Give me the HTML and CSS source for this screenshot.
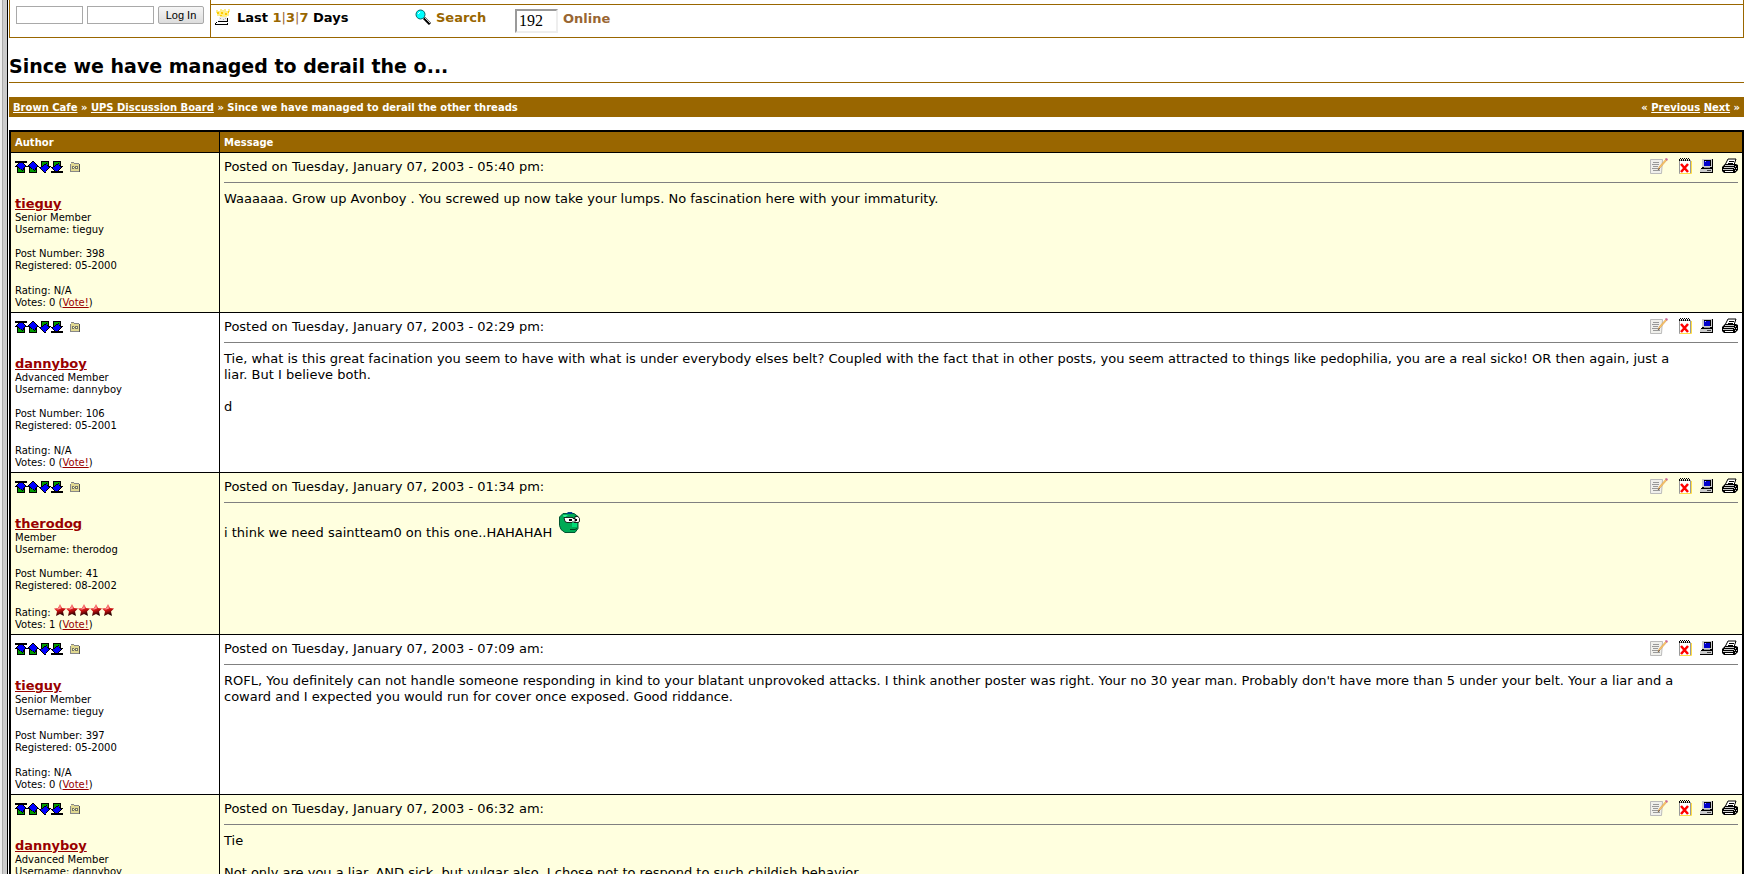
FILE: index.html
```html
<!DOCTYPE html>
<html lang="en">
<head>
    <meta charset="UTF-8">
    <meta name="viewport" content="width=device-width, initial-scale=1.0">
    <title>Brown Cafe: Since we have managed to derail the other threads</title>
    <link rel="stylesheet" href="styles.css">
</head>
<body>
    <!-- Icon set -->
    <svg class="sprite" aria-hidden="true">
        <symbol id="up" viewBox="0 0 12 12">
            <path d="M2 5h8v7H2z" fill="#000"/><path d="M3 5h6v6H3z" fill="#090"/>
            <path d="M0 5h1V4h1V3h1V2h1V1h1V0h2v1h1v1h1v1h1v1h1v1h1v1h-2v1H9v2H8v1H7V9H6V8H4V7H3V6H0z" fill="#000"/>
            <path d="M2 5V4h1V3h1V2h1V1h2v1h1v1h1v1h1v2H9v1H8v2H7V8H5V7H4V6H3V5z" fill="#00f"/>
        </symbol>
        <symbol id="top" viewBox="0 0 12 12">
            <use href="#up"/><path d="M0 0h12v2H0z" fill="#000"/>
        </symbol>
        <symbol id="down" viewBox="0 0 12 12">
            <path d="M2 0h8v7H2z" fill="#000"/><path d="M3 1h6v6H3z" fill="#090"/>
            <path d="M0 6h3V5h1V4h1V3h2V2h1v2h1v1h3v1h-1v1h-1v1H9v1H8v1H7v2H5v-1H4v-1H3V9H2V8H1V7H0z" fill="#000"/>
            <path d="M2 6h2V5h1V4h2V3h1v2h1v1h1v1H9v1H8v1H7v2H5v-1H4V9H3V8H2z" fill="#00f"/>
        </symbol>
        <symbol id="bottom" viewBox="0 0 12 12">
            <use href="#down"/><path d="M0 10h12v2H0z" fill="#000"/>
        </symbol>
        <symbol id="folder" viewBox="0 0 10 10">
            <path d="M1 1h3v1h6v8H1z" fill="#555"/><path d="M0 2h1V1h3v1h5v7H0z" fill="#e0d890"/>
            <path d="M0 2h1v7H0zM1 0h3v1H1zM4 1h5v1H4zM0 9h9v1H0z" fill="#888"/>
            <path d="M2 4h2v1h1V4h3v3H5V6H4v1H2z" fill="#776"/><path d="M3 5h1v1H3zM6 5h1v1H6z" fill="#ffc"/>
        </symbol>
        <symbol id="edit" viewBox="0 0 18 16">
            <path d="M.5 1.5h12l-1 14H.5z" fill="#f0f0ec" stroke="#bbb"/>
            <path d="M3 4.500h6M2 6.500h7M3 8.500h5M2 10.500h6M3 12.500h7" stroke="#999"/>
            <path d="M8 12l1-3 7-8 1 1-7 8z" fill="#fc6" stroke="#c84" stroke-width=".5"/>
            <path d="M15 1l1-1 2 1-1 2z" fill="#c69"/><path d="M8 12l1-2 1 1z" fill="#333"/>
        </symbol>
        <symbol id="delete" viewBox="0 0 14 16">
            <path d="M1.500 2.500h11v13h-11z" fill="#fff" stroke="#999"/><path d="M13.500 3v12.500H2" stroke="#fd4" fill="none"/>
            <path d="M1 1h1v2H1zM3 1h1v2H3zM5 1h1v2H5zM7 1h1v2H7zM9 1h1v2H9zM11 1h1v2h-1zM2 0h1v1H2zM4 0h1v1H4zM6 0h1v1H6zM8 0h1v1H8zM10 0h1v1h-1z" fill="#000"/>
            <path d="M3 6l7 8M10 6l-7 8" stroke="#f00" stroke-width="2.500"/>
        </symbol>
        <symbol id="computer" viewBox="0 0 14 14">
            <path d="M2 0h11v9H2z" fill="#000"/><path d="M2 0h10v8H2z" fill="#ccc"/><path d="M4 1h7v6H4z" fill="#000"/><path d="M4 2h6v5H4z" fill="#00c"/>
            <path d="M5 2h1v1H5z" fill="#aaf"/><path d="M4 8h6v1H4z" fill="#999"/>
            <path d="M1 9h12v5H0v-4h1z" fill="#000"/><path d="M0 10h12v3H0z" fill="#ccc"/><path d="M7 11h4v1H7z" fill="#444"/>
        </symbol>
        <symbol id="print" viewBox="0 0 16 16">
            <path d="M6 1h8l-2 6H3z" fill="#fff" stroke="#000"/><path d="M7 3.500h5M6 5.500h5" stroke="#000"/>
            <path d="M0 9l3-3h11l2 1v5l-3 3H2l-2-2z" fill="#000"/>
            <path d="M3 7h9v1H3zM2 9h10v1H2zM1 11h10v1H1z" fill="#ccc"/><path d="M3 13h8v1H3z" fill="#fff"/>
            <path d="M13 8h1v1h-1zM12 10h1v1h-1zM14 10h1v1h-1zM13 12h1v1h-1z" fill="#ccc"/>
        </symbol>
        <symbol id="star" viewBox="0 0 12 12">
            <path d="M6 0l2 4 4 .5-3 3 1 4.500-4-2-4 2 1-4.500-3-3L4 4z" fill="url(#ruby)"/>
            <path d="M6 1l1 3.500-3 1-2-.5L5 4z" fill="#f99"/>
        </symbol>
        <linearGradient id="ruby" x2=".3" y2="1">
            <stop offset=".2" stop-color="#f66"/><stop offset=".6" stop-color="#c11"/><stop offset="1" stop-color="#200"/>
        </linearGradient>
    </svg>

    <div class="frame-edge"></div>
    <div class="page">
        <div class="toolbar">
            <form class="login">
                <input type="text" aria-label="Username">
                <input type="password" aria-label="Password">
                <button type="submit">Log In</button>
            </form>
            <div class="quick">
                <div class="days">
                    <svg width="16" height="17" viewBox="0 0 16 17" shape-rendering="crispEdges">
                        <path d="M1 1h2v1h2V0h2v1h2V0h2v2h2V0h2v3h-1v4h-2v1H5V7H2V4H1z" fill="#fe8"/>
                        <path d="M2 3h2v2H2zM6 3h2v2H6zM10 4h2v2h-2zM5 6h2v1H5zM13 2h1v2h-1z" fill="#fc0"/>
                        <path d="M4 8h8v4H3v-1h1z" fill="#eee"/><path d="M5 9h1v1H5zM8 10h1v1H8zM10 9h1v1h-1z" fill="#aaa"/>
                        <path d="M3 12h9v1H3zM12 9h1v4h-1zM0 14h13v2H0zM1 13h1v1H1z" fill="#000"/>
                        <path d="M1 14h11v1H1z" fill="#fff"/>
                    </svg>
                    <span>Last <a href="#">1</a><i>|</i><a href="#">3</a><i>|</i><a href="#">7</a> Days</span>
                </div>
                <a class="search" href="#">
                    <svg width="16" height="16" viewBox="0 0 16 16">
                        <path d="M9 9l6 6" stroke="#000" stroke-width="3"/><path d="M10 9l5 5" stroke="#ccc"/>
                        <circle cx="5.500" cy="5.500" r="4.500" fill="#0ff" stroke="#066"/><path d="M3 5l2-2" stroke="#fff"/>
                    </svg>
                    <span>Search</span>
                </a>
                <label class="online"><input type="text" value="192"> <span>Online</span></label>
            </div>
        </div>

        <h1>Since we have managed to derail the o...</h1>

        <div class="crumbs">
            <div><a href="#">Brown Cafe</a> » <a href="#">UPS Discussion Board</a> » Since we have managed to derail the other threads</div>
            <div>« <a href="#">Previous</a> <a href="#">Next</a> »</div>
        </div>

        <table class="thread">
            <thead>
                <tr><th class="author">Author</th><th>Message</th></tr>
            </thead>
            <tbody>
                <tr>
                    <td>
                        <div class="nav">
                            <a href="#" aria-label="Top of page"><svg><use href="#top"/></svg></a><a href="#" aria-label="Previous message"><svg><use href="#up"/></svg></a><a href="#" aria-label="Next message"><svg><use href="#down"/></svg></a><a href="#" aria-label="Bottom of page"><svg><use href="#bottom"/></svg></a>
                            <a href="#" class="folder" aria-label="Link to this message"><svg><use href="#folder"/></svg></a>
                        </div>
                        <a class="name" href="#">tieguy</a>
                        <p>Senior Member<br>Username: tieguy</p>
                        <p>Post Number: 398<br>Registered: 05-2000</p>
                        <p>Rating: N/A<br>Votes: 0 (<a href="#">Vote!</a>)</p>
                    </td>
                    <td>
                        <div class="post-head">
                            <span>Posted on Tuesday, January 07, 2003 - 05:40 pm:</span>
                            <div class="tools">
                                <a class="edit" href="#" aria-label="Edit"><svg width="18" height="16"><use href="#edit"/></svg></a>
                                <a href="#" aria-label="Delete"><svg width="14" height="16"><use href="#delete"/></svg></a>
                                <a href="#" aria-label="View IP"><svg width="14" height="14"><use href="#computer"/></svg></a>
                                <a href="#" aria-label="Print"><svg width="16" height="16"><use href="#print"/></svg></a>
                            </div>
                        </div>
                        <div class="post">Waaaaaa. Grow up Avonboy . You screwed up now take your lumps. No fascination here with your immaturity.</div>
                    </td>
                </tr>
                <tr>
                    <td>
                        <div class="nav">
                            <a href="#" aria-label="Top of page"><svg><use href="#top"/></svg></a><a href="#" aria-label="Previous message"><svg><use href="#up"/></svg></a><a href="#" aria-label="Next message"><svg><use href="#down"/></svg></a><a href="#" aria-label="Bottom of page"><svg><use href="#bottom"/></svg></a>
                            <a href="#" class="folder" aria-label="Link to this message"><svg><use href="#folder"/></svg></a>
                        </div>
                        <a class="name" href="#">dannyboy</a>
                        <p>Advanced Member<br>Username: dannyboy</p>
                        <p>Post Number: 106<br>Registered: 05-2001</p>
                        <p>Rating: N/A<br>Votes: 0 (<a href="#">Vote!</a>)</p>
                    </td>
                    <td>
                        <div class="post-head">
                            <span>Posted on Tuesday, January 07, 2003 - 02:29 pm:</span>
                            <div class="tools">
                                <a class="edit" href="#" aria-label="Edit"><svg width="18" height="16"><use href="#edit"/></svg></a>
                                <a href="#" aria-label="Delete"><svg width="14" height="16"><use href="#delete"/></svg></a>
                                <a href="#" aria-label="View IP"><svg width="14" height="14"><use href="#computer"/></svg></a>
                                <a href="#" aria-label="Print"><svg width="16" height="16"><use href="#print"/></svg></a>
                            </div>
                        </div>
                        <div class="post">Tie, what is this great facination you seem to have with what is under everybody elses belt? Coupled with the fact that in other posts, you seem attracted to things like pedophilia, you are a real sicko! OR then again, just a<br>liar. But I believe both.<br><br>d</div>
                    </td>
                </tr>
                <tr>
                    <td>
                        <div class="nav">
                            <a href="#" aria-label="Top of page"><svg><use href="#top"/></svg></a><a href="#" aria-label="Previous message"><svg><use href="#up"/></svg></a><a href="#" aria-label="Next message"><svg><use href="#down"/></svg></a><a href="#" aria-label="Bottom of page"><svg><use href="#bottom"/></svg></a>
                            <a href="#" class="folder" aria-label="Link to this message"><svg><use href="#folder"/></svg></a>
                        </div>
                        <a class="name" href="#">therodog</a>
                        <p>Member<br>Username: therodog</p>
                        <p>Post Number: 41<br>Registered: 08-2002</p>
                        <p>Rating: <span class="stars"><svg><use href="#star"/></svg><svg><use href="#star"/></svg><svg><use href="#star"/></svg><svg><use href="#star"/></svg><svg><use href="#star"/></svg></span><br>Votes: 1 (<a href="#">Vote!</a>)</p>
                    </td>
                    <td>
                        <div class="post-head">
                            <span>Posted on Tuesday, January 07, 2003 - 01:34 pm:</span>
                            <div class="tools">
                                <a class="edit" href="#" aria-label="Edit"><svg width="18" height="16"><use href="#edit"/></svg></a>
                                <a href="#" aria-label="Delete"><svg width="14" height="16"><use href="#delete"/></svg></a>
                                <a href="#" aria-label="View IP"><svg width="14" height="14"><use href="#computer"/></svg></a>
                                <a href="#" aria-label="Print"><svg width="16" height="16"><use href="#print"/></svg></a>
                            </div>
                        </div>
                        <div class="post">i think we need saintteam0 on this one..HAHAHAH
                            <svg class="smiley" width="22" height="22" viewBox="0 0 22 22">
                                <path d="M4 1.500h11l4 3v12l-3 4H6l-4-3-1.500-4V5z" fill="#0a5" stroke="#053"/>
                                <path d="M7 2l2-2h4l1 2z" fill="#048"/><path d="M4 3h5L5 6z" fill="#3e9"/>
                                <path d="M5 5.500h9v1h6v3l-2 1h-3l-1-1-1 1H8l-2-1z" fill="#fff" stroke="#000" stroke-width=".8"/>
                                <path d="M16 4.500h3l1.500 2v3l-1.500 1h-3z" fill="#fff" stroke="#000" stroke-width=".8"/>
                                <path d="M10 7h3v2h-3zM16 7h2v2h-2z" fill="#000"/><path d="M13 11h5v4h-5z" fill="#0d7"/>
                                <path d="M11 17.500h5l2-1" fill="none" stroke="#042"/>
                            </svg>
                        </div>
                    </td>
                </tr>
                <tr>
                    <td>
                        <div class="nav">
                            <a href="#" aria-label="Top of page"><svg><use href="#top"/></svg></a><a href="#" aria-label="Previous message"><svg><use href="#up"/></svg></a><a href="#" aria-label="Next message"><svg><use href="#down"/></svg></a><a href="#" aria-label="Bottom of page"><svg><use href="#bottom"/></svg></a>
                            <a href="#" class="folder" aria-label="Link to this message"><svg><use href="#folder"/></svg></a>
                        </div>
                        <a class="name" href="#">tieguy</a>
                        <p>Senior Member<br>Username: tieguy</p>
                        <p>Post Number: 397<br>Registered: 05-2000</p>
                        <p>Rating: N/A<br>Votes: 0 (<a href="#">Vote!</a>)</p>
                    </td>
                    <td>
                        <div class="post-head">
                            <span>Posted on Tuesday, January 07, 2003 - 07:09 am:</span>
                            <div class="tools">
                                <a class="edit" href="#" aria-label="Edit"><svg width="18" height="16"><use href="#edit"/></svg></a>
                                <a href="#" aria-label="Delete"><svg width="14" height="16"><use href="#delete"/></svg></a>
                                <a href="#" aria-label="View IP"><svg width="14" height="14"><use href="#computer"/></svg></a>
                                <a href="#" aria-label="Print"><svg width="16" height="16"><use href="#print"/></svg></a>
                            </div>
                        </div>
                        <div class="post">ROFL, You definitely can not handle someone responding in kind to your blatant unprovoked attacks. I think another poster was right. Your no 30 year man. Probably don't have more than 5 under your belt. Your a liar and a<br>coward and I expected you would run for cover once exposed. Good riddance.</div>
                    </td>
                </tr>
                <tr>
                    <td>
                        <div class="nav">
                            <a href="#" aria-label="Top of page"><svg><use href="#top"/></svg></a><a href="#" aria-label="Previous message"><svg><use href="#up"/></svg></a><a href="#" aria-label="Next message"><svg><use href="#down"/></svg></a><a href="#" aria-label="Bottom of page"><svg><use href="#bottom"/></svg></a>
                            <a href="#" class="folder" aria-label="Link to this message"><svg><use href="#folder"/></svg></a>
                        </div>
                        <a class="name" href="#">dannyboy</a>
                        <p>Advanced Member<br>Username: dannyboy</p>
                    </td>
                    <td>
                        <div class="post-head">
                            <span>Posted on Tuesday, January 07, 2003 - 06:32 am:</span>
                            <div class="tools">
                                <a class="edit" href="#" aria-label="Edit"><svg width="18" height="16"><use href="#edit"/></svg></a>
                                <a href="#" aria-label="Delete"><svg width="14" height="16"><use href="#delete"/></svg></a>
                                <a href="#" aria-label="View IP"><svg width="14" height="14"><use href="#computer"/></svg></a>
                                <a href="#" aria-label="Print"><svg width="16" height="16"><use href="#print"/></svg></a>
                            </div>
                        </div>
                        <div class="post">Tie<br><br>Not only are you a liar. AND sick, but vulgar also. I chose not to respond to such childish behavior.</div>
                    </td>
                </tr>
            </tbody>
        </table>
    </div>
</body>
</html>
```
FILE: styles.css
```css
* {
    box-sizing: border-box;
}

body {
    margin: 0;
    height: 100vh;
    display: flex;
    overflow: hidden;
    background: #fff;
    color: #000;
    font-family: Verdana, "DejaVu Sans", sans-serif;
    font-size: 13px;
    line-height: 16px;
}

a {
    color: #900;
}

.sprite {
    position: absolute;
    width: 0;
    height: 0;
}

/* Left frame border */
.frame-edge {
    flex: none;
    width: 8px;
    margin-right: 1px;
    background: #ccc;
    border-left: 2px solid #eee;
    border-right: 1px solid #000;
    box-shadow: inset 1px 0 #aaa;
}

.page {
    flex: 1;
    min-width: 0;
}

/* Toolbar */
.toolbar {
    display: flex;
    border: 1px solid #960;
    border-top: none;
}

.login {
    display: flex;
    align-items: flex-start;
    gap: 4px;
    padding: 6px 6px 13px;
}

.login input {
    width: 67px;
    height: 18px;
    border: 1px solid #a9a9a9;
    background: #fff;
}

.login button {
    width: 46px;
    height: 18px;
    padding: 0;
    border: 1px solid #a9a9a9;
    border-radius: 2px;
    background: linear-gradient(#f6f6f6, #ddd);
    color: #000;
    font: 11px/16px "Liberation Sans", Arial, sans-serif;
}

.quick {
    flex: 1;
    display: flex;
    align-items: flex-start;
    margin-top: 4px;
    padding: 4px;
    border-top: 1px solid #960;
    border-left: 1px solid #960;
    position: relative;
    font-weight: bold;
}

/* carries the divider up past the rule */
.quick::before {
    content: "";
    position: absolute;
    left: -1px;
    top: -5px;
    height: 5px;
    border-left: 1px solid #960;
}

.quick a {
    color: #960;
    text-decoration: none;
}

.quick i {
    color: #963;
    font-style: normal;
    font-weight: normal;
}

.quick span {
    padding-top: 1px;
}

.days {
    display: flex;
    gap: 6px;
    width: 200px;
}

.search {
    display: flex;
    gap: 5px;
    width: 100px;
}

.online {
    display: flex;
    gap: 5px;
    color: #963;
    line-height: 18px;
}

.online input {
    width: 43px;
    height: 24px;
    padding: 1px 2px;
    border: 2px inset #eee;
    font: 16px "Liberation Serif", "Times New Roman", serif;
}

/* Title */
h1 {
    margin: 16px 0 14px;
    padding-bottom: 4px;
    border-bottom: 1px solid #960;
    font-size: 19px;
    line-height: 24px;
}

.crumbs {
    display: flex;
    justify-content: space-between;
    margin-bottom: 13px;
    padding: 5px 4px 3px;
    background: #960;
    color: #fff;
    font-size: 10px;
    font-weight: bold;
    line-height: 12px;
}

.crumbs a {
    color: #fff;
}

/* Thread */
.thread {
    width: 100%;
    border: 2px solid #000;
    border-spacing: 0;
}

.thread th {
    padding: 5px 4px 3px;
    background: #960;
    color: #fff;
    font-size: 10px;
    line-height: 12px;
    text-align: left;
}

.thread .author {
    width: 209px;
}

.thread td {
    padding: 5px 4px 3px;
    border-top: 1px solid #000;
    vertical-align: top;
}

.thread th:first-child,
.thread td:first-child {
    border-right: 1px solid #000;
}

.thread tbody tr:nth-child(odd) {
    background: #ffffdf;
}

.nav {
    display: flex;
    align-items: center;
    height: 16px;
    margin-bottom: 22px;
    padding-top: 2px;
}

.nav svg {
    display: block;
    width: 12px;
    height: 12px;
    shape-rendering: crispEdges;
}

.nav .folder {
    margin-left: 7px;
}

.nav .folder svg {
    width: 10px;
    height: 10px;
}

.name {
    display: block;
    font-weight: bold;
}

.thread p {
    margin: 0 0 12px;
    font-size: 10px;
    line-height: 12px;
}

.thread p + p + p {
    margin: 13px 0 0;
}

.stars svg {
    width: 12px;
    height: 12px;
    margin-top: -1px;
}

.post-head {
    display: flex;
    justify-content: space-between;
    align-items: flex-start;
    height: 25px;
    margin-bottom: 8px;
    border-bottom: 1px solid #808080;
}

.post-head span {
    padding-top: 1px;
}

.tools {
    display: flex;
    align-items: center;
    gap: 8px;
}

.tools .edit {
    margin-right: 2px;
}

.tools svg {
    display: block;
}

.smiley {
    margin: 1px 0 3px 3px;
}
```
